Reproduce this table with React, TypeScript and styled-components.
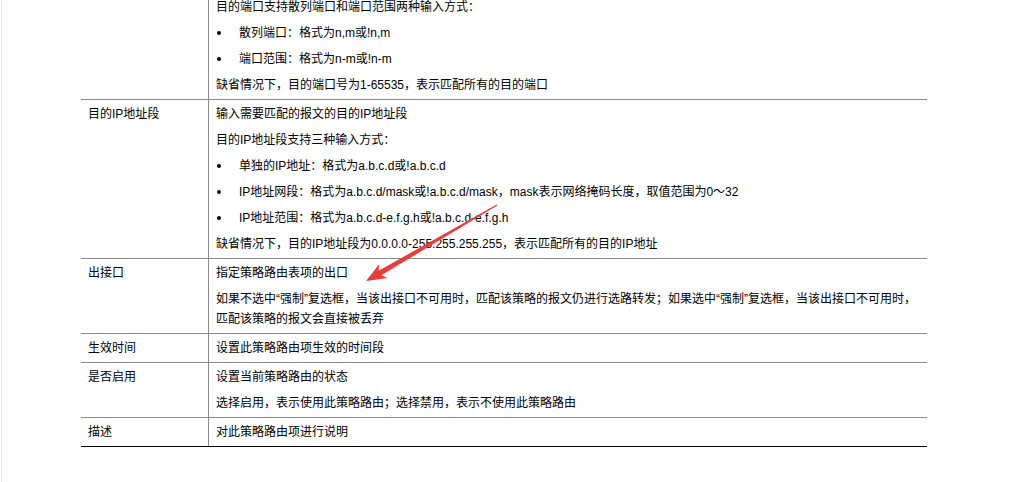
import styled, { createGlobalStyle } from 'styled-components'

type Para = { text: string; bullet?: boolean }

interface ParamRow {
  label: string
  paras: Para[]
}

const rows: ParamRow[] = [
  {
    label: '目的端口',
    paras: [
      { text: '输入需要匹配的报文的目的端口' },
      { text: '目的端口支持散列端口和端口范围两种输入方式：' },
      { text: '散列端口：格式为n,m或!n,m', bullet: true },
      { text: '端口范围：格式为n-m或!n-m', bullet: true },
      { text: '缺省情况下，目的端口号为1-65535，表示匹配所有的目的端口' },
    ],
  },
  {
    label: '目的IP地址段',
    paras: [
      { text: '输入需要匹配的报文的目的IP地址段' },
      { text: '目的IP地址段支持三种输入方式：' },
      { text: '单独的IP地址：格式为a.b.c.d或!a.b.c.d', bullet: true },
      {
        text: 'IP地址网段：格式为a.b.c.d/mask或!a.b.c.d/mask，mask表示网络掩码长度，取值范围为0～32',
        bullet: true,
      },
      { text: 'IP地址范围：格式为a.b.c.d-e.f.g.h或!a.b.c.d-e.f.g.h', bullet: true },
      { text: '缺省情况下，目的IP地址段为0.0.0.0-255.255.255.255，表示匹配所有的目的IP地址' },
    ],
  },
  {
    label: '出接口',
    paras: [
      { text: '指定策略路由表项的出口' },
      {
        text: '如果不选中“强制”复选框，当该出接口不可用时，匹配该策略的报文仍进行选路转发；如果选中“强制”复选框，当该出接口不可用时，匹配该策略的报文会直接被丢弃',
      },
    ],
  },
  {
    label: '生效时间',
    paras: [{ text: '设置此策略路由项生效的时间段' }],
  },
  {
    label: '是否启用',
    paras: [
      { text: '设置当前策略路由的状态' },
      { text: '选择启用，表示使用此策略路由；选择禁用，表示不使用此策略路由' },
    ],
  },
  {
    label: '描述',
    paras: [{ text: '对此策略路由项进行说明' }],
  },
]

const GlobalStyle = createGlobalStyle`
  html, body {
    margin: 0;
    height: 100%;
    background: #fff;
  }
  body {
    font-family: 'Liberation Sans', 'Noto Sans CJK SC', sans-serif;
    font-size: 12px;
    color: #000;
  }
`

const Page = styled.div`
  position: relative;
  height: 482px;
  margin-left: 1px;
  border-left: 1px solid #e4e4e4;
  overflow: hidden;
`

// the first row is scrolled partly out of view in the screenshot
const Table = styled.div`
  width: 846px;
  margin: -33px 0 0 79px;
`

const Row = styled.div<{ $last: boolean }>`
  display: grid;
  grid-template-columns: 128px 1fr;
  border-bottom: 1px solid ${({ $last }) => ($last ? '#000' : '#8a8a8a')};
`

const LabelCell = styled.div`
  padding: 4px 7px;
  line-height: 20px;
  border-right: 1px solid #8a8a8a;
`

const DescCell = styled.div`
  padding: 4px 7px;
  display: flex;
  flex-direction: column;
  gap: 6px;
`

const Text = styled.p`
  margin: 0;
  line-height: 20px;
`

const BulletItem = styled.p`
  margin: 0;
  line-height: 20px;
  display: flex;
  align-items: center;
`

const Dot = styled.span`
  flex: none;
  width: 4px;
  height: 4px;
  margin: 0 18px 0 1px;
  border-radius: 50%;
  background: #000;
`

const ArrowLayer = styled.svg`
  position: absolute;
  left: -2px;
  top: 0;
  pointer-events: none;
`

// red annotation arrow drawn over the table
const Arrow = () => (
  <ArrowLayer width="1030" height="482" viewBox="0 0 1030 482">
    <polygon
      fill="#ee3a3a"
      points="366,281 387.5,278 381.2,275.2 497.3,205.5 496.7,204.5 378.6,270.8 379.3,264 "
    />
  </ArrowLayer>
)

export default function App() {
  return (
    <>
      <GlobalStyle />
      <Page>
        <Table>
          {rows.map((row, i) => (
            <Row key={row.label} $last={i === rows.length - 1}>
              <LabelCell>{row.label}</LabelCell>
              <DescCell>
                {row.paras.map((p, j) =>
                  p.bullet ? (
                    <BulletItem key={j}>
                      <Dot />
                      {p.text}
                    </BulletItem>
                  ) : (
                    <Text key={j}>{p.text}</Text>
                  )
                )}
              </DescCell>
            </Row>
          ))}
        </Table>
        <Arrow />
      </Page>
    </>
  )
}
